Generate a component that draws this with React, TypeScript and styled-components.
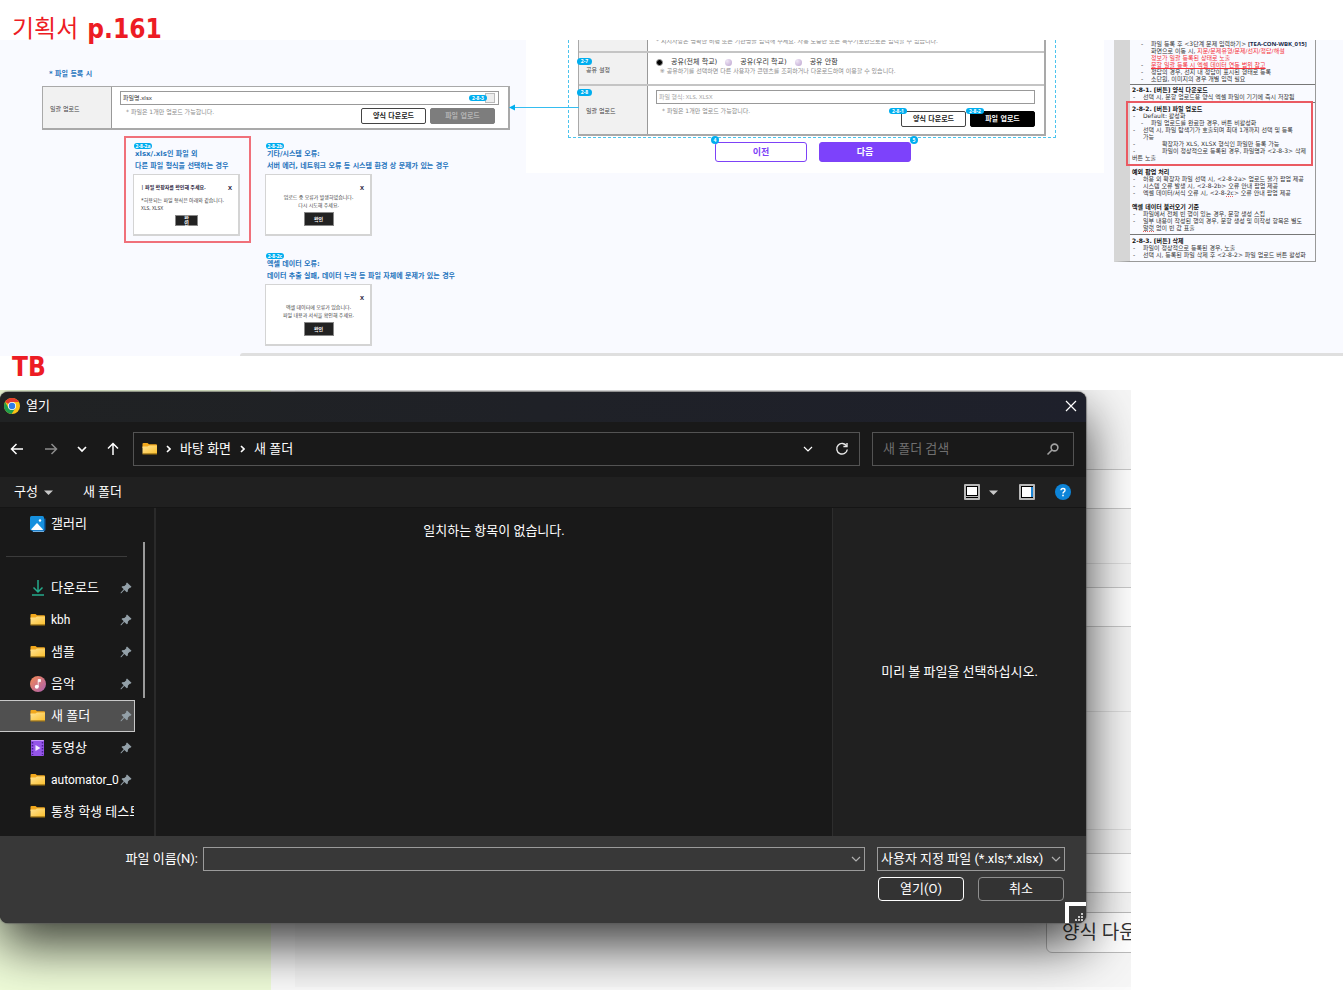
import React from "react";
import styled, { createGlobalStyle, css } from "styled-components";

const GlobalStyle = createGlobalStyle`
  * { box-sizing: border-box; }
  body { margin: 0; background: #fff; }
  button, input, select { font: inherit; color: inherit; margin: 0; padding: 0; }
  p, h1, h2, h3, ul { margin: 0; padding: 0; font-size: inherit; }
  ul { list-style: none; }
`;

const uiFont = `Roboto, "Noto Sans CJK KR", sans-serif`;
const docFont = `"DejaVu Sans", "Noto Sans CJK KR", sans-serif`;
const tinyFont = `"Noto Sans", "Noto Sans CJK KR", sans-serif`;
const headingFont = `"DejaVu Sans Condensed", "DejaVu Sans", "Noto Sans CJK KR", sans-serif`;

/* ---------- page ---------- */

const Page = styled.main`
  font-family: ${docFont};
  color: #222;
`;

const Heading = styled.h1<{ $tall?: boolean }>`
  display: flex;
  align-items: ${(p) => (p.$tall ? "flex-end" : "flex-start")};
  gap: 9px;
  height: ${(p) => (p.$tall ? 40 : 34)}px;
  padding-left: 12px;
  color: #ed1c24;
  font-family: ${headingFont};
  font-size: 26px;
  font-weight: 700;
  line-height: 22px;
  white-space: nowrap;
`;

const HeadingKorean = styled.span`
  font-size: 24px;
  font-weight: 400;
  line-height: 22px;
`;

/* ---------- specification board ---------- */

const Board = styled.section`
  background: #f9faff;
  font-size: 7px;
  line-height: 8px;
  white-space: nowrap;
`;

const BoardColumns = styled.div`
  display: grid;
  grid-template-columns: 526fr 578fr 239fr;
  align-items: start;
  min-height: 313px;
`;

const BoardScroll = styled.div`
  height: 3px;
  margin-left: 240px;
  border-top-left-radius: 3px;
  background: #dfdfdf;
`;

const LeftColumn = styled.div`
  min-width: 0;
  padding: 30px 16px 0 42px;
`;

const Caption = styled.h2`
  padding-left: 7px;
  margin-bottom: 8px;
  color: #1f74bd;
  font-weight: 700;
`;

const FormTable = styled.div`
  border: 1px solid #a9a9a9;
  border-width: 1px 2px 2px 1px;
  background: #fff;
`;

const FormRow = styled.div<{ $h: number }>`
  display: grid;
  grid-template-columns: 69px 1fr;
  height: ${(p) => p.$h}px;
  & + & { border-top: 2px solid #c4c4c4; }
`;

const FormLabel = styled.label`
  position: relative;
  display: flex;
  align-items: center;
  padding: 2px 0 0 7px;
  border-right: 1px solid #999;
  background: #f1f1f1;
  color: #444;
  font-size: 6px;
`;

const FormCell = styled.div`
  position: relative;
  padding: 4px 9px 0 8px;
  min-width: 0;
`;

const FileBox = styled.div`
  position: relative;
  display: flex;
  align-items: center;
  height: 14px;
  padding: 0 3px 0 2px;
  border: 1px solid #999;
  background: #fff;
`;

const FileInput = styled.input`
  flex: 1;
  min-width: 0;
  border: 0;
  outline: 0;
  background: none;
  font-family: ${tinyFont};
  font-size: 6px;
  color: #333;
  &::placeholder { color: #a5a5a5; opacity: 1; }
`;

const ClearButton = styled.button`
  width: 10px;
  height: 10px;
  border: 1px solid #bbb;
  background: #eee;
`;

const FormFoot = styled.div<{ $end?: number }>`
  display: flex;
  justify-content: space-between;
  padding: 3px ${(p) => p.$end ?? 4}px 0 6px;
`;

const Hint = styled.p`
  color: #8a8a8a;
  font-size: 6px;
`;

const ButtonPair = styled.div<{ $low?: boolean }>`
  display: flex;
  gap: 4px;
  padding-top: ${(p) => (p.$low ? 4 : 0)}px;
`;

const DocButton = styled.button<{ $tone: "line" | "grey" | "black" }>`
  position: relative;
  width: 65px;
  height: 16px;
  border: 1px solid #444;
  border-radius: 2px;
  background: #fff;
  color: #222;
  font-size: 7px;
  font-weight: 700;
  line-height: 12px;
  ${(p) => p.$tone === "grey" && css`background: #7d7d7d; border-color: #7d7d7d; color: #b5b5b5;`}
  ${(p) => p.$tone === "black" && css`background: #000; border-color: #000; color: #fff;`}
`;

const Badge = styled.span<{ $x: number; $y: number; $w?: number; $h?: number }>`
  position: absolute;
  left: ${(p) => p.$x}px;
  top: ${(p) => p.$y}px;
  width: ${(p) => p.$w ?? 18}px;
  height: ${(p) => p.$h ?? 6}px;
  border-radius: 4px;
  background: #00aeef;
  color: #fff;
  font-family: ${tinyFont};
  font-size: 5px;
  font-weight: 700;
  line-height: ${(p) => p.$h ?? 6}px;
  text-align: center;
`;

const FileBadge = styled(Badge)`
  left: auto;
  right: 11px;
`;

const Cases = styled.div`
  display: grid;
  grid-template-columns: 127px 127px;
  gap: 3px 5px;
  padding: 6px 0 0 82px;
`;

const Case = styled.article<{ $marked?: boolean; $second?: boolean }>`
  position: relative;
  height: 107px;
  padding: 10px 7px 0;
  border: 2px solid ${(p) => (p.$marked ? "#f0707a" : "transparent")};
  ${(p) => p.$second && css`grid-column: 2;`}
`;

const CaseTitle = styled.h3`
  height: 26px;
  padding-left: 2px;
  color: #1f74bd;
  font-size: 7px;
  font-weight: 700;
  line-height: 12px;
`;

const Popup = styled.div`
  display: flex;
  flex-direction: column;
  width: 107px;
  height: 62px;
  padding: 8px 6px 8px 7px;
  border: 1px solid #d4d4d4;
  border-width: 1px 2px 2px 1px;
  background: #fff;
  color: #444;
  font-family: ${tinyFont};
  font-size: 5px;
  line-height: 8px;
`;

const PopupHead = styled.div`
  display: flex;
  justify-content: space-between;
  height: 10px;
  color: #2b2440;
  font-weight: 700;
`;

const PopupClose = styled.button`
  border: 0;
  background: none;
  font-size: 6px;
  line-height: 6px;
  font-weight: 700;
  margin-left: auto;
`;

const PopupText = styled.p<{ $center?: boolean }>`
  flex: 1;
  padding-top: ${(p) => (p.$center ? 0 : 3)}px;
  text-align: ${(p) => (p.$center ? "center" : "left")};
`;

const PopupButton = styled.button<{ $narrow?: boolean }>`
  align-self: center;
  width: ${(p) => (p.$narrow ? 23 : 30)}px;
  height: ${(p) => (p.$narrow ? 11 : 14)}px;
  border: 1px solid #888;
  background: #222;
  color: #fff;
  font-size: 5px;
  font-weight: 700;
  line-height: ${(p) => (p.$narrow ? 5 : 10)}px;
`;

const MiddlePanel = styled.div`
  position: relative;
  min-width: 0;
  height: 133px;
  padding: 0 48px 0 42px;
  background: #fff;
`;

const DashedArea = styled.div`
  height: 98px;
  padding: 0 9px;
  border: 1px dashed #4cc4ee;
  border-top: 0;
`;

const Arrow = styled.svg`
  position: absolute;
  left: -17px;
  top: 63px;
`;

const MiddleTable = styled(FormTable)`
  border-top: 0;
`;

const ClippedCell = styled.div`
  overflow: hidden;
  padding-left: 8px;
`;

const ClippedHint = styled(Hint)`
  margin-top: -3px;
`;

const Radios = styled.div`
  display: flex;
  align-items: center;
  gap: 8px;
  height: 10px;
`;

const RadioLabel = styled.label`
  display: flex;
  align-items: center;
  gap: 8px;
  color: #333;
`;

const Radio = styled.input`
  appearance: none;
  width: 7px;
  height: 7px;
  border-radius: 50%;
  background: radial-gradient(circle at 30% 30%, #efe6f5, #bca3cf);
  &:checked { background: #000; border: 1px solid #999; }
`;

const StepButtons = styled.div`
  display: flex;
  justify-content: center;
  gap: 12px;
  padding: 4px 0 0 2px;
`;

const StepButton = styled.button<{ $filled?: boolean }>`
  position: relative;
  width: 92px;
  height: 20px;
  border: 1px solid #7d42f7;
  border-radius: 3px;
  background: ${(p) => (p.$filled ? "#7d42fb" : "#fff")};
  color: ${(p) => (p.$filled ? "#fff" : "#7d42f7")};
  font-size: 9px;
  font-weight: 700;
  line-height: 16px;
`;

const Notes = styled.div`
  position: relative;
  min-width: 0;
  margin: 0 27px 0 10px;
  border: 1px solid #999;
  border-top: 0;
  border-left: 16px solid #d6d6d6;
  font-size: 6px;
  line-height: 7px;
  color: #333;
`;

const NoteSection = styled.section<{ $top?: number; $h: number }>`
  position: relative;
  height: ${(p) => p.$h}px;
  padding: ${(p) => p.$top ?? 1}px 0 0 2px;
  & + & { border-top: 1px solid #777; }
`;

const NoteTitle = styled.h3`
  color: #111;
  font-weight: 700;
`;

const NoteItem = styled.li<{ $level?: number; $gap?: number }>`
  display: grid;
  grid-template-columns: ${(p) => p.$gap ?? 10}px 1fr;
  padding-left: ${(p) => (p.$level ?? 0) * 8 + 1}px;
`;

const Code = styled.b`
  font-family: ${tinyFont};
  line-height: 1px;
  color: #1b2a4a;
`;

const Red = styled.span<{ $line?: boolean }>`
  color: #f5303a;
  text-decoration: ${(p) => (p.$line ? "underline" : "none")};
`;

const Typo = styled.span`
  text-decoration: underline dotted #f06060;
`;

const Highlight = styled.div`
  position: absolute;
  inset: -2px 2px auto -4px;
  height: 65px;
  border: 2px solid #ea5a62;
`;

/* ---------- captured screen ---------- */

const Screen = styled.section`
  position: relative;
  display: flex;
  width: calc(100% - 212px);
  min-height: 600px;
  overflow: hidden;
  font-family: ${uiFont};
`;

const GreenSide = styled.div`
  flex: 0 0 271px;
  background: #effcd9;
`;

const SiteForm = styled.div`
  flex: 1;
  min-width: 0;
  padding: 0 0 3px 24px;
  background: #fbfbfb;
`;

const SitePanel = styled.div`
  padding: 79px 0 34px;
  background: #f6f6f6;
`;

const SiteField = styled.div<{ $after: number }>`
  height: 40px;
  margin-bottom: ${(p) => p.$after}px;
  border: 1px solid #c8c8c8;
  border-right: 0;
  background: #fff;
`;

const SiteRule = styled.hr<{ $after: number }>`
  height: 1px;
  margin: 0 0 ${(p) => p.$after}px;
  border: 0;
  background: #dedede;
`;

const SiteActions = styled.div`
  padding-left: calc(100% - 85px);
`;

const SiteButton = styled.button`
  display: block;
  height: 41px;
  padding: 0 15px;
  border: 1px solid #bbb;
  border-radius: 6px;
  background: #fff;
  color: #333;
  font-size: 19px;
  line-height: 36px;
  white-space: nowrap;
`;

/* ---------- file dialog ---------- */

const Dialog = styled.div`
  position: absolute;
  top: 2px;
  left: 0;
  right: 45px;
  border-radius: 8px;
  background: #191919;
  color: #fff;
  font-size: 13px;
  line-height: 18px;
  white-space: nowrap;
  box-shadow: 0 0 1px 1px rgba(90, 90, 90, 0.6), 0 22px 52px rgba(0, 0, 0, 0.76);
`;

const TitleBar = styled.header`
  display: flex;
  align-items: center;
  gap: 6px;
  height: 30px;
  padding: 0 9px 2px 4px;
  border-radius: 8px 8px 0 0;
  background: linear-gradient(90deg, #202223, #1e202b);
`;

const IconButton = styled.button`
  display: flex;
  padding: 0;
  border: 0;
  background: none;
`;

const PushRight = styled.span`
  margin-left: auto;
`;

const NavBar = styled.nav`
  display: flex;
  align-items: center;
  height: 55px;
  padding: 0 12px 1px 9px;
`;

const NavButtons = styled.div`
  display: flex;
  align-items: center;
  gap: 18px;
  width: 124px;
`;

const AddressBar = styled.div`
  display: flex;
  flex: 1;
  align-items: center;
  gap: 8px;
  height: 34px;
  padding: 0 10px 0 8px;
  border: 1px solid #535353;
`;

const Crumb = styled.a`
  padding: 0 1px;
  color: inherit;
  text-decoration: none;
`;

const AddressTools = styled.div`
  display: flex;
  align-items: center;
  gap: 22px;
  margin-left: auto;
`;

const SearchBox = styled.div`
  display: flex;
  align-items: center;
  width: 202px;
  height: 34px;
  margin-left: 12px;
  padding: 0 13px 0 10px;
  border: 1px solid #535353;
`;

const SearchInput = styled.input`
  flex: 1;
  min-width: 0;
  border: 0;
  outline: 0;
  background: none;
  &::placeholder { color: #707070; opacity: 1; }
`;

const Toolbar = styled.div`
  display: flex;
  align-items: center;
  height: 31px;
  padding: 0 15px 0 14px;
  border-bottom: 1px solid #151515;
  background: #202020;
`;

const ToolButton = styled.button`
  display: flex;
  align-items: center;
  gap: 6px;
  margin-right: 30px;
  border: 0;
  background: none;
`;

const ToolIcons = styled.div`
  display: flex;
  align-items: center;
  margin-left: auto;
`;

const ToolIcon = styled(IconButton)<{ $after: number }>`
  margin-right: ${(p) => p.$after}px;
`;

const Body = styled.div`
  display: flex;
  height: 328px;
`;

const Tree = styled.div`
  display: flex;
  gap: 8px;
  width: 156px;
  border-right: 2px solid #2a2a2a;
`;

const TreeList = styled.ul`
  width: 135px;
`;

const TreeRow = styled.button<{ $selected?: boolean }>`
  display: flex;
  align-items: center;
  width: 100%;
  height: 32px;
  padding: 0 0 0 30px;
  border: 1px solid transparent;
  border-width: 1px 1px 1px 0;
  background: none;
  text-align: left;
  ${(p) => p.$selected && css`background: #505050; border-color: #c8c8c8;`}
`;

const TreeName = styled.span<{ $latin?: boolean }>`
  flex: 1;
  min-width: 0;
  margin-left: 5px;
  overflow: hidden;
  font-size: ${(p) => (p.$latin ? 12 : 13)}px;
`;

const TreeRule = styled.li`
  height: 32px;
  margin: 0 8px 0 6px;
  background: linear-gradient(#3b3b3b, #3b3b3b) 0 16px / 100% 1px no-repeat;
`;

const TreeScroll = styled.div`
  width: 2px;
  height: 156px;
  margin-top: 34px;
  background: #9a9a9a;
`;

const FileList = styled.div`
  flex: 1;
  padding-top: 14px;
  text-align: center;
`;

const Preview = styled.aside`
  display: flex;
  align-items: center;
  justify-content: center;
  width: 254px;
  border-left: 1px solid #2d2d2d;
  background: #202020;
`;

const Footer = styled.footer`
  position: relative;
  display: grid;
  grid-template-columns: 203px 1fr 188px;
  row-gap: 6px;
  align-content: start;
  height: 87px;
  padding: 11px 21px 0 0;
  border-radius: 0 0 8px 8px;
  background: #383838;
`;

const NameLabel = styled.label`
  padding: 3px 5px 0 0;
  text-align: right;
`;

const Combo = styled.div<{ $gap?: boolean }>`
  position: relative;
  display: flex;
  height: 24px;
  margin-right: ${(p) => (p.$gap ? 12 : 0)}px;
  border: 1px solid #9b9b9b;
`;

const ComboInput = styled.input`
  flex: 1;
  min-width: 0;
  padding: 0 24px 0 4px;
  border: 0;
  outline: 0;
  background: none;
`;

const ComboSelect = styled.select`
  appearance: none;
  flex: 1;
  min-width: 0;
  padding: 0 20px 0 3px;
  border: 0;
  outline: 0;
  background: none;
`;

const ComboArrow = styled.span`
  position: absolute;
  right: 3px;
  top: 7px;
  display: flex;
  pointer-events: none;
`;

const DialogButtons = styled.div`
  grid-column: 3;
  display: flex;
  justify-content: space-between;
  padding: 0 1px;
`;

const DialogButton = styled.button<{ $primary?: boolean }>`
  width: 86px;
  height: 24px;
  border: 1px solid ${(p) => (p.$primary ? "#fff" : "#8f8f8f")};
  border-radius: 4px;
  background: #333;
  line-height: 18px;
`;

const Grip = styled.span`
  position: absolute;
  right: 0;
  bottom: 0;
  display: flex;
`;

/* ---------- icons ---------- */

const ChromeIcon = () => (
  <svg width="16" height="16" viewBox="0 0 16 16">
    <circle cx="8" cy="8" r="8" fill="#fbc116" />
    <path d="M8 8 L1.1 4 A8 8 0 0 1 14.9 4 L8 4 Z" fill="#e33b2e" />
    <path d="M1.1 4 A8 8 0 0 0 7.6 16 L11.4 10 L8 8 L4.5 10 Z" fill="#1f9d4d" />
    <circle cx="8" cy="8" r="4" fill="#fff" />
    <circle cx="8" cy="8" r="3.2" fill="#2f7de9" />
  </svg>
);

const CloseIcon = () => (
  <svg width="12" height="12" viewBox="0 0 12 12" stroke="#fff" strokeWidth="1.2">
    <path d="M1 1 L11 11 M11 1 L1 11" />
  </svg>
);

const ArrowIcon = ({ dir, color = "#fff" }: { dir: "left" | "right" | "up"; color?: string }) => {
  const d = {
    left: "M14 8 H2.5 M7.5 3 L2.5 8 L7.5 13",
    right: "M2 8 H13.5 M8.5 3 L13.5 8 L8.5 13",
    up: "M8 14 V2.5 M3 7.5 L8 2.5 L13 7.5",
  }[dir];
  return (
    <svg width="16" height="16" viewBox="0 0 16 16" fill="none" stroke={color} strokeWidth="1.5">
      <path d={d} />
    </svg>
  );
};

const ChevronIcon = ({ color = "#fff", bold }: { color?: string; bold?: boolean }) => (
  <svg width="10" height="8" viewBox="0 0 10 8" fill="none" stroke={color} strokeWidth={bold ? 1.7 : 1.2}>
    <path d="M1 2 L5 6 L9 2" />
  </svg>
);

const CrumbArrow = () => (
  <svg width="5" height="8" viewBox="0 0 5 8" fill="none" stroke="#fff" strokeWidth="1.6">
    <path d="M1 1 L4 4 L1 7" />
  </svg>
);

const ReloadIcon = () => (
  <svg width="14" height="14" viewBox="0 0 14 14" fill="none" stroke="#e8e8e8" strokeWidth="1.4">
    <path d="M11.6 4 A5.3 5.3 0 1 0 12.3 7.5" />
    <path d="M12 1 V4.5 H8.4" />
  </svg>
);

const SearchIcon = () => (
  <svg width="14" height="14" viewBox="0 0 14 14" fill="none" stroke="#a0a0a0" strokeWidth="1.6">
    <circle cx="8.5" cy="5.5" r="3.4" />
    <path d="M6 8 L1.5 12.5" />
  </svg>
);

const FolderIcon = () => (
  <svg width="16" height="16" viewBox="0 0 16 16">
    <defs>
      <linearGradient id="folder" x1="0" y1="0" x2="1" y2="1">
        <stop offset="0" stopColor="#ffe394" />
        <stop offset="1" stopColor="#fbc02f" />
      </linearGradient>
    </defs>
    <path d="M0.5 3 Q0.5 2 1.500 2 H5.500 L7 3.200 H14 Q15 3.200 15 4.200 V7 H0.5 Z" fill="#f2a81c" />
    <path d="M0.5 5.600 H5.500 L7 4.600 H15 V12.700 H0.5 Z" fill="url(#folder)" />
    <path d="M0.5 13 H15" stroke="#a8790f" />
  </svg>
);

const GalleryIcon = () => (
  <svg width="16" height="16" viewBox="0 0 16 16">
    <path d="M2 15.500 H13.500 Q15.500 15.500 15.500 13.500 V2.500 L3 3 Z" fill="#0d5ea6" />
    <rect x="0" y="0" width="14" height="14.500" rx="1.500" fill="#1690de" />
    <circle cx="10" cy="4.500" r="1.200" fill="#fff" />
    <path d="M1 13.500 L7 7 L13 13.500 Q13 14 12 14 H2 Z" fill="#fff" />
    <path d="M3 15.400 H14" stroke="#7dbcf0" />
  </svg>
);

const DownloadIcon = () => (
  <svg width="16" height="16" viewBox="0 0 16 16" fill="none" stroke="#25ab8c" strokeWidth="1.500">
    <path d="M8 0 V11.500 M3.500 7.500 L8 12 L12.500 7.500 M2 15 H14" />
  </svg>
);

const MusicIcon = () => (
  <svg width="16" height="16" viewBox="0 0 16 16">
    <defs>
      <linearGradient id="music" x1="0" y1="0" x2="1" y2="1">
        <stop offset="0" stopColor="#f58b52" />
        <stop offset="1" stopColor="#ac5fb0" />
      </linearGradient>
    </defs>
    <circle cx="8" cy="8" r="8" fill="url(#music)" />
    <circle cx="6.800" cy="10.700" r="2" fill="#fff" />
    <path d="M8.200 11 V3.500 H10.500 V5.700 H8.200" fill="#fff" stroke="#fff" strokeWidth="0.800" />
  </svg>
);

const VideoIcon = () => (
  <svg width="16" height="16" viewBox="0 0 16 16">
    <rect x="1" width="13" height="16" rx="1" fill="#9455e8" />
    <path d="M1 1 Q1 0 2 0 H13 Q14 0 14 1 Z" fill="#c99cf7" />
    <path d="M2.500 2 V15 M12.500 2 V15" stroke="#4c1d99" strokeWidth="1.500" strokeDasharray="1.500 1.500" />
    <path d="M5.500 5 L10.500 8 L5.500 11 Z" fill="#f3ebff" />
  </svg>
);

const PinIcon = () => (
  <svg width="12" height="12" viewBox="0 0 12 12" fill="#93a0a8">
    <path d="M7 0.500 L11.500 4.800 L10.500 5.800 L9.800 5.700 L8 7.600 L7.700 9.800 L6.800 10.300 L4.300 7.900 L1.300 11.200 L0.600 11.300 L0.700 10.600 L3.700 7.300 L1.500 5 L2.200 4.200 L4.400 4 L6.300 2.200 L6.100 1.400 Z" />
  </svg>
);

const PinSlot = styled.span`
  display: flex;
  padding-right: 2px;
`;

const CaretIcon = () => (
  <svg width="9" height="5" viewBox="0 0 9 5">
    <path d="M0 0.500 H9 L4.500 5 Z" fill="#c8c8c8" />
  </svg>
);

const ViewIcon = ({ pane }: { pane?: boolean }) => (
  <svg width="16" height="16" viewBox="0 0 16 16">
    <rect width="16" height="16" rx="1" fill="#b8b8b8" />
    <rect x="2" y="2" width="12" height="12" fill="#000" />
    <rect x="3" y="3" width="10" height={pane ? 10 : 8} fill="#fff" />
    {pane ? <rect x="12" y="3" width="2" height="10" fill="#1b86d8" /> : <path d="M2 12.500 H14" stroke="#b8b8b8" />}
  </svg>
);

const HelpIcon = () => (
  <svg width="16" height="16" viewBox="0 0 16 16">
    <circle cx="8" cy="8" r="8" fill="#0d84d8" />
    <path d="M6 6.300 Q6 4.500 8 4.500 Q10 4.500 10 6.200 Q10 7.200 8.900 7.800 Q8 8.300 8 9.400" fill="none" stroke="#fff" strokeWidth="1.400" />
    <rect x="7.200" y="10.700" width="1.600" height="1.600" fill="#fff" />
  </svg>
);

const GripIcon = () => (
  <svg width="21" height="21" viewBox="0 0 21 21">
    <path d="M0 0 H21 V4 H4 V21 H0 Z" fill="#fff" />
    <path d="M16 11 h2 v2 h-2z M13 14 h2 v2 h-2z M16 14 h2 v2 h-2z M10 17 h2 v2 h-2z M13 17 h2 v2 h-2z M16 17 h2 v2 h-2z" fill="#c8c8c8" />
  </svg>
);

/* ---------- content ---------- */

type TreeEntry = { name: string; icon: React.ReactNode; pinned?: boolean; selected?: boolean; latin?: boolean };

const treeEntries: TreeEntry[] = [
  { name: "다운로드", icon: <DownloadIcon />, pinned: true },
  { name: "kbh", icon: <FolderIcon />, pinned: true, latin: true },
  { name: "샘플", icon: <FolderIcon />, pinned: true },
  { name: "음악", icon: <MusicIcon />, pinned: true },
  { name: "새 폴더", icon: <FolderIcon />, pinned: true, selected: true },
  { name: "동영상", icon: <VideoIcon />, pinned: true },
  { name: "automator_0", icon: <FolderIcon />, pinned: true, latin: true },
  { name: "통창 학생 테스트", icon: <FolderIcon /> },
];

const Item = ({ children, level, gap }: { children: React.ReactNode; level?: number; gap?: number }) => (
  <NoteItem $level={level} $gap={gap}>
    <span>-</span>
    <span>{children}</span>
  </NoteItem>
);

const SpecNotes = () => (
  <Notes>
    <NoteSection $h={44} $top={0}>
      <ul>
        <Item level={1}>
          파일 등록 후 &lt;3단계 문제 입력하기&gt; <Code>[TEA-CON-WBK_015]</Code>
          <br />
          화면으로 이동 시, <Red>지문/문제유형/문제/선지/정답/해설</Red>
          <br />
          <Red>정보가 일괄 등록된 상태로 노출</Red>
        </Item>
        <Item level={1}><Red $line>문항 일괄 등록 시 엑셀 데이터 연동 범위 참고</Red></Item>
        <Item level={1}>정답의 경우, 선지 내 정답이 표시된 형태로 등록</Item>
        <Item level={1}>소단원, 이미지의 경우 개별 입력 필요</Item>
      </ul>
    </NoteSection>
    <NoteSection $h={18}>
      <NoteTitle>2-8-1. [버튼] 양식 다운로드</NoteTitle>
      <ul><Item>선택 시, 문항 업로드용 양식 엑셀 파일이 기기에 즉시 저장됨</Item></ul>
    </NoteSection>
    <NoteSection $h={132} $top={2}>
      <Highlight />
      <NoteTitle>2-8-2. [버튼] 파일 업로드</NoteTitle>
      <ul>
        <Item>Default: 활성화</Item>
        <Item level={1}>파일 업로드를 완료한 경우, 버튼 비활성화</Item>
        <Item>
          선택 시, 파일 탐색기가 호출되며 최대 1개까지 선택 및 등록
          <br />
          가능
        </Item>
        <Item gap={29}>확장자가 XLS, XLSX 형식인 파일만 등록 가능</Item>
        <Item gap={29}>파일이 정상적으로 등록된 경우, 파일명과 &lt;2-8-3&gt; 삭제</Item>
      </ul>
      <p>버튼 노출</p>
      <br />
      <NoteTitle>예외 팝업 처리</NoteTitle>
      <ul>
        <Item>허용 외 확장자 파일 선택 시, &lt;2-8-2a&gt; 업로드 불가 팝업 제공</Item>
        <Item>시스템 오류 발생 시, &lt;2-8-2b&gt; 오류 안내 팝업 제공</Item>
        <Item>엑셀 데이터/서식 오류 시, &lt;2-8-<Typo>2c</Typo>&gt; 오류 안내 팝업 제공</Item>
      </ul>
      <br />
      <NoteTitle>엑셀 데이터 불러오기 기준</NoteTitle>
      <ul>
        <Item>파일에서 전체 빈 행이 있는 경우, 문항 생성 스킵</Item>
        <Item>
          일부 내용이 작성된 행의 경우, 문항 생성 및 미작성 항목은 별도
          <br />
          <Typo>알럿</Typo> 없이 빈 값 표출
        </Item>
      </ul>
    </NoteSection>
    <NoteSection $h={27} $top={2}>
      <NoteTitle>2-8-3. [버튼] 삭제</NoteTitle>
      <ul>
        <Item>파일이 정상적으로 등록된 경우, 노출</Item>
        <Item>선택 시, 등록된 파일 삭제 후 &lt;2-8-2&gt; 파일 업로드 버튼 활성화</Item>
      </ul>
    </NoteSection>
  </Notes>
);

const UploadedPreview = () => (
  <LeftColumn>
    <Caption>* 파일 등록 시</Caption>
    <FormTable>
      <FormRow $h={41}>
        <FormLabel htmlFor="uploaded">일괄 업로드</FormLabel>
        <FormCell>
          <FileBox>
            <FileInput id="uploaded" defaultValue="파일명.xlsx" />
            <ClearButton aria-label="삭제" />
            <FileBadge $x={0} $y={3}>2-8-3</FileBadge>
          </FileBox>
          <FormFoot>
            <Hint>* 파일은 1개만 업로드 가능합니다.</Hint>
            <ButtonPair>
              <DocButton $tone="line">양식 다운로드</DocButton>
              <DocButton $tone="grey" disabled>파일 업로드</DocButton>
            </ButtonPair>
          </FormFoot>
        </FormCell>
      </FormRow>
    </FormTable>
    <Cases>
      <Case $marked>
        <Badge $x={8} $y={5}>2-8-2a</Badge>
        <CaseTitle>xlsx/.xls인 파일 외<br />다른 파일 형식을 선택하는 경우</CaseTitle>
        <Popup>
          <PopupHead>| 파일 확장자를 확인해 주세요.<PopupClose>X</PopupClose></PopupHead>
          <PopupText>*허용되는 파일 형식은 아래와 같습니다.<br />XLS, XLSX</PopupText>
          <PopupButton $narrow>확<br />인</PopupButton>
        </Popup>
      </Case>
      <Case>
        <Badge $x={8} $y={5}>2-8-2b</Badge>
        <CaseTitle>기타/시스템 오류:<br />서버 에러, 네트워크 오류 등 시스템 환경 상 문제가 있는 경우</CaseTitle>
        <Popup>
          <PopupHead><PopupClose>X</PopupClose></PopupHead>
          <PopupText $center>업로드 중 오류가 발생하였습니다.<br />다시 시도해 주세요.</PopupText>
          <PopupButton>확인</PopupButton>
        </Popup>
      </Case>
      <Case $second>
        <Badge $x={8} $y={5}>2-8-2c</Badge>
        <CaseTitle>엑셀 데이터 오류:<br />데이터 추출 실패, 데이터 누락 등 파일 자체에 문제가 있는 경우</CaseTitle>
        <Popup>
          <PopupHead><PopupClose>X</PopupClose></PopupHead>
          <PopupText $center>엑셀 데이터에 오류가 있습니다.<br />파일 내용과 서식을 확인해 주세요.</PopupText>
          <PopupButton>확인</PopupButton>
        </Popup>
      </Case>
    </Cases>
  </LeftColumn>
);

const UploadForm = () => (
  <MiddlePanel>
    <DashedArea>
      <MiddleTable>
        <FormRow $h={11}>
          <FormLabel as="div" />
          <ClippedCell>
            <ClippedHint>* 지시사항은 명확한 비평 또는 기관명을 입력해 주세요. 사용 도중만 또는 특수기호만으로는 입력할 수 없습니다.</ClippedHint>
          </ClippedCell>
        </FormRow>
        <FormRow $h={33}>
          <FormLabel as="div">
            <Badge $x={-2} $y={5} $w={15} $h={7}>2-7</Badge>
            공유 설정
          </FormLabel>
          <FormCell>
            <Radios>
              <RadioLabel><Radio type="radio" name="share" defaultChecked />공유(전체 학교)</RadioLabel>
              <RadioLabel><Radio type="radio" name="share" />공유(우리 학교)</RadioLabel>
              <RadioLabel><Radio type="radio" name="share" />공유 안함</RadioLabel>
            </Radios>
            <Hint>&nbsp; ※ 공유하기를 선택하면 다른 사용자가 콘텐츠를 조회하거나 다운로드하며 이용할 수 있습니다.</Hint>
          </FormCell>
        </FormRow>
        <FormRow $h={50}>
          <FormLabel htmlFor="upload">
            <Badge $x={-2} $y={3} $w={15} $h={7}>2-8</Badge>
            일괄 업로드
          </FormLabel>
          <FormCell>
            <FileBox><FileInput id="upload" placeholder="파일 형식: XLS, XLSX" /></FileBox>
            <FormFoot $end={0}>
              <Hint>* 파일은 1개만 업로드 가능합니다.</Hint>
              <ButtonPair $low>
                <DocButton $tone="line"><Badge $x={-13} $y={-4}>2-8-1</Badge>양식 다운로드</DocButton>
                <DocButton $tone="black"><Badge $x={-5} $y={-4}>2-8-2</Badge>파일 업로드</DocButton>
              </ButtonPair>
            </FormFoot>
          </FormCell>
        </FormRow>
      </MiddleTable>
    </DashedArea>
    <StepButtons>
      <StepButton><Badge $x={-5} $y={-7} $w={8} $h={8}>4</Badge>이전</StepButton>
      <StepButton $filled><Badge $x={90} $y={-7} $w={8} $h={8}>5</Badge>다음</StepButton>
    </StepButtons>
    <Arrow width="70" height="8" viewBox="0 0 70 8">
      <path d="M4 4.500 H70" stroke="#35bdf0" />
      <path d="M0 4.500 L6 1.500 V7.500 Z" fill="#00aeef" />
    </Arrow>
  </MiddlePanel>
);

const FileDialog = () => (
  <Dialog role="dialog" aria-label="열기">
    <TitleBar>
      <ChromeIcon />
      <span>열기</span>
      <PushRight><IconButton aria-label="닫기"><CloseIcon /></IconButton></PushRight>
    </TitleBar>
    <NavBar>
      <NavButtons>
        <IconButton aria-label="뒤로"><ArrowIcon dir="left" /></IconButton>
        <IconButton aria-label="앞으로"><ArrowIcon dir="right" color="#8c8c8c" /></IconButton>
        <IconButton aria-label="최근 위치"><ChevronIcon bold /></IconButton>
        <IconButton aria-label="위로"><ArrowIcon dir="up" /></IconButton>
      </NavButtons>
      <AddressBar>
        <FolderIcon />
        <CrumbArrow />
        <Crumb href="#desktop">바탕 화면</Crumb>
        <CrumbArrow />
        <Crumb href="#folder">새 폴더</Crumb>
        <AddressTools>
          <IconButton aria-label="이전 위치"><ChevronIcon /></IconButton>
          <IconButton aria-label="새로 고침"><ReloadIcon /></IconButton>
        </AddressTools>
      </AddressBar>
      <SearchBox>
        <SearchInput type="text" aria-label="새 폴더 검색" placeholder="새 폴더 검색" />
        <SearchIcon />
      </SearchBox>
    </NavBar>
    <Toolbar>
      <ToolButton>구성 <CaretIcon /></ToolButton>
      <ToolButton>새 폴더</ToolButton>
      <ToolIcons>
        <ToolIcon $after={9} aria-label="보기"><ViewIcon /></ToolIcon>
        <ToolIcon $after={21} aria-label="보기 옵션"><CaretIcon /></ToolIcon>
        <ToolIcon $after={20} aria-label="미리 보기 창"><ViewIcon pane /></ToolIcon>
        <ToolIcon $after={0} aria-label="도움말"><HelpIcon /></ToolIcon>
      </ToolIcons>
    </Toolbar>
    <Body>
      <Tree>
        <TreeList>
          <li><TreeRow><GalleryIcon /><TreeName>갤러리</TreeName></TreeRow></li>
          <TreeRule />
          {treeEntries.map((e) => (
            <li key={e.name}>
              <TreeRow $selected={e.selected}>
                {e.icon}
                <TreeName $latin={e.latin}>{e.name}</TreeName>
                {e.pinned && <PinSlot><PinIcon /></PinSlot>}
              </TreeRow>
            </li>
          ))}
        </TreeList>
        <TreeScroll />
      </Tree>
      <FileList>일치하는 항목이 없습니다.</FileList>
      <Preview>미리 볼 파일을 선택하십시오.</Preview>
    </Body>
    <Footer>
      <NameLabel htmlFor="filename">파일 이름(N):</NameLabel>
      <Combo $gap>
        <ComboInput id="filename" type="text" />
        <ComboArrow><ChevronIcon color="#b0b0b0" /></ComboArrow>
      </Combo>
      <Combo>
        <ComboSelect aria-label="파일 형식">
          <option>사용자 지정 파일 (*.xls;*.xlsx)</option>
        </ComboSelect>
        <ComboArrow><ChevronIcon color="#b0b0b0" /></ComboArrow>
      </Combo>
      <DialogButtons>
        <DialogButton $primary>열기(O)</DialogButton>
        <DialogButton>취소</DialogButton>
      </DialogButtons>
      <Grip><GripIcon /></Grip>
    </Footer>
  </Dialog>
);

export default function App() {
  return (
    <Page lang="ko">
      <GlobalStyle />
      <Heading $tall><HeadingKorean>기획서</HeadingKorean>p.161</Heading>
      <Board>
        <BoardColumns>
          <UploadedPreview />
          <UploadForm />
          <SpecNotes />
        </BoardColumns>
        <BoardScroll />
      </Board>
      <Heading as="h2">TB</Heading>
      <Screen>
        <GreenSide />
        <SiteForm>
          <SitePanel>
            <SiteField $after={54} />
            <SiteRule $after={23} />
            <SiteField $after={84} />
            <SiteRule $after={117} />
            <SiteRule $after={23} />
            <SiteField $after={19} />
            <SiteActions><SiteButton>양식 다운로드</SiteButton></SiteActions>
          </SitePanel>
        </SiteForm>
        <FileDialog />
      </Screen>
    </Page>
  );
}
